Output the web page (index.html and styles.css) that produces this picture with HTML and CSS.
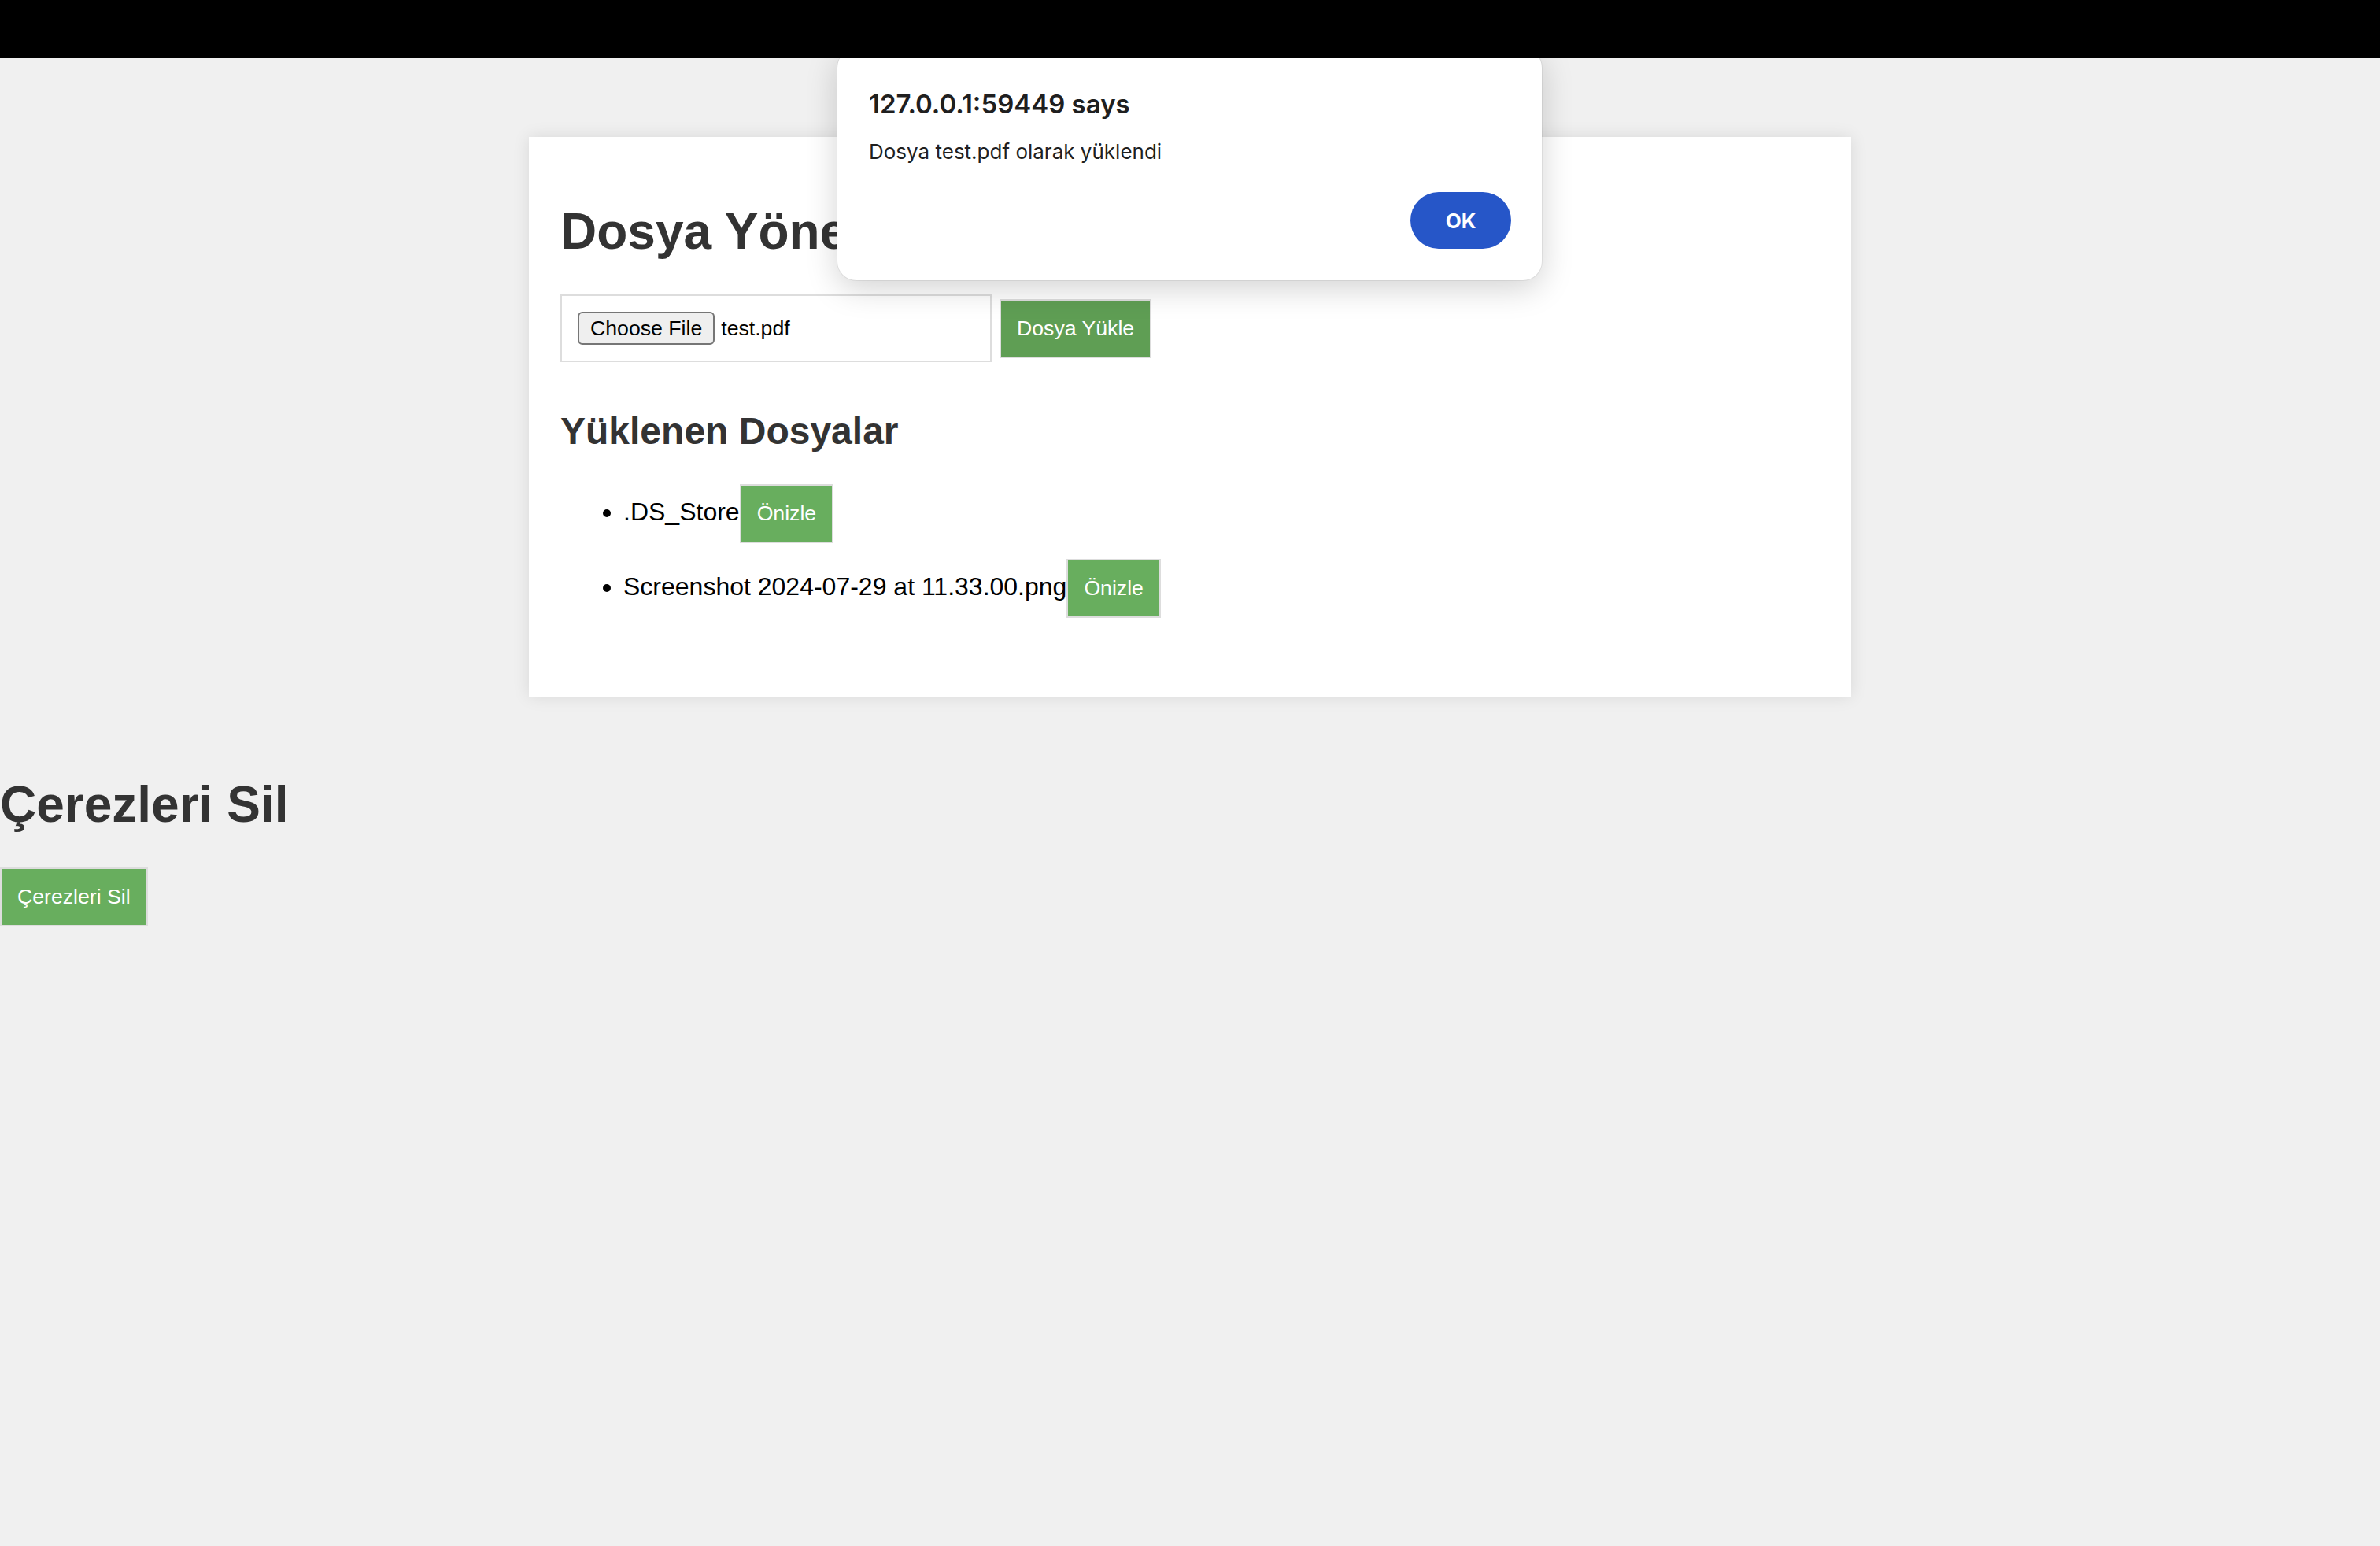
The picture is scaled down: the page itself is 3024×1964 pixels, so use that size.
FILE: index.html
```html
<!DOCTYPE html>
<html lang="tr">
<head>
<meta charset="utf-8">
<title>Dosya Yönetimi</title>
<link rel="stylesheet" href="styles.css">
</head>
<body>
<div class="topbar"></div>

<div class="container">
  <h1 class="title">Dosya Yönetimi</h1>
  <form class="upload">
    <div class="file-input">
      <span class="file-btn">Choose File</span>
      <span class="file-name">test.pdf</span>
    </div>
    <button type="button" class="btn btn-dark">Dosya Yükle</button>
  </form>

  <h2 class="subtitle">Yüklenen Dosyalar</h2>
  <ul class="files">
    <li>.DS_Store<button type="button" class="btn">Önizle</button></li>
    <li>Screenshot 2024-07-29 at 11.33.00.png<button type="button" class="btn">Önizle</button></li>
  </ul>
</div>

<h1 class="title">Çerezleri Sil</h1>
<button type="button" class="btn">Çerezleri Sil</button>

<div class="dialog">
  <div class="dialog-title">127.0.0.1:59449 says</div>
  <div class="dialog-msg">Dosya test.pdf olarak yüklendi</div>
  <div class="dialog-actions">
    <button type="button" class="dialog-ok">OK</button>
  </div>
</div>
</body>
</html>
```

FILE: styles.css
```css
html, body {
  margin: 0;
  padding: 0;
}

body {
  background: #f0f0f0;
  font-family: "Liberation Sans", Arial, sans-serif;
  min-height: 1964px;
  position: relative;
}

.topbar {
  height: 74px;
  background: #000;
  position: relative;
  z-index: 3;
}

.container {
  width: 1600px;
  padding: 40px;
  margin: 100px auto;
  background: #fff;
  box-shadow: 0 0 20px rgba(0, 0, 0, 0.1);
}

.title {
  font-size: 64px;
  font-weight: bold;
  color: #333;
  margin: 43px 0;
}

.upload {
  display: flex;
  align-items: center;
  gap: 10px;
  margin: 0;
}

.file-input {
  width: 504px;
  height: 42px;
  padding: 20px;
  border: 2px solid #ddd;
  display: flex;
  align-items: center;
  gap: 8px;
  font-size: 26.67px;
  color: #000;
}

.file-btn {
  box-sizing: border-box;
  height: 42px;
  padding: 0 14px;
  display: flex;
  align-items: center;
  background: #efefef;
  border: 2px solid #767676;
  border-radius: 6px;
}

.subtitle {
  font-size: 48px;
  font-weight: bold;
  color: #333;
  margin: 60px 0 40px;
}

.files {
  margin: 40px 0 60px;
  padding-left: 80px;
  font-size: 32px;
  color: #000;
}

.files li {
  margin-bottom: 20px;
}

.btn {
  font-family: "Liberation Sans", Arial, sans-serif;
  font-size: 26.67px;
  line-height: normal;
  color: #fff;
  background: #68ae5e;
  border: 2px solid #ddd;
  padding: 20px;
  border-radius: 0;
  margin: 0;
}

.btn-dark {
  background: #5f9e54;
}

.dialog {
  position: absolute;
  top: 62px;
  left: 1064px;
  width: 895px;
  box-sizing: border-box;
  padding: 50px 39px 40px 40px;
  background: #fff;
  border-radius: 24px;
  box-shadow: 0 0 0 1px rgba(0, 0, 0, 0.06), 0 10px 40px rgba(0, 0, 0, 0.18);
  font-family: Inter, "Noto Sans", sans-serif;
  color: #1f1f1f;
  z-index: 2;
}

.dialog-title {
  font-size: 33px;
  line-height: 40px;
  font-weight: 600;
}

.dialog-msg {
  font-size: 26px;
  line-height: 32px;
  margin-top: 25px;
}

.dialog-actions {
  display: flex;
  justify-content: flex-end;
  margin-top: 35px;
}

.dialog-ok {
  width: 128px;
  height: 72px;
  border: none;
  border-radius: 36px;
  background: #2656c8;
  color: #fff;
  font-family: Inter, "Noto Sans", sans-serif;
  font-size: 26px;
  font-weight: 700;
}
```
